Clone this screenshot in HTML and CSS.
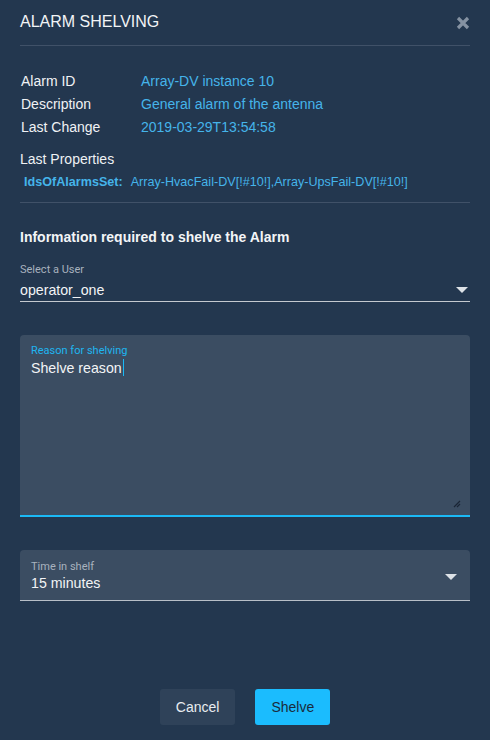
FILE: index.html
```html
<!DOCTYPE html>
<html>
<head>
<meta charset="utf-8">
<link rel="stylesheet" href="styles.css">
</head>
<body>
<div class="dialog">
  <div class="header">
    <h1 class="title">ALARM SHELVING</h1>
    <svg class="close" width="14" height="14" viewBox="0 0 14 14"><path d="M2 2 L12 12 M12 2 L2 12" stroke="#8592a2" stroke-width="3.2" stroke-linecap="butt"/></svg>
  </div>
  <div class="info">
    <div class="row"><span class="label">Alarm ID</span><span class="value">Array-DV instance 10</span></div>
    <div class="row"><span class="label">Description</span><span class="value">General alarm of the antenna</span></div>
    <div class="row"><span class="label">Last Change</span><span class="value">2019-03-29T13:54:58</span></div>
  </div>
  <div class="props-title">Last Properties</div>
  <div class="props"><span class="prop-key">IdsOfAlarmsSet:</span><span class="prop-val">Array-HvacFail-DV[!#10!],Array-UpsFail-DV[!#10!]</span></div>
  <div class="section-title">Information required to shelve the Alarm</div>
  <div class="select-user">
    <div class="small-label">Select a User</div>
    <div class="select-line"><span>operator_one</span><span class="arrow"></span></div>
  </div>
  <div class="textarea-box">
    <div class="small-label blue">Reason for shelving</div>
    <div class="text">Shelve reason<span class="caret"></span></div>
    <svg class="resize" width="8" height="8" viewBox="0 0 8 8"><path d="M1 7 L7 1 M4 7 L7 4" stroke="#1a2535" stroke-width="1.2"/></svg>
  </div>
  <div class="time-box">
    <div class="time-inner">
      <div class="small-label">Time in shelf</div>
      <div class="text">15 minutes</div>
    </div>
    <span class="arrow"></span>
  </div>
  <div class="buttons">
    <button class="btn cancel">Cancel</button>
    <button class="btn shelve">Shelve</button>
  </div>
</div>
</body>
</html>
```
FILE: styles.css
```css
* { box-sizing: border-box; }
html, body { margin: 0; padding: 0; }
body {
  background: #23374f;
  width: 490px;
  height: 740px;
  font-family: "Liberation Sans", Arial, sans-serif;
  color: #e8ecf0;
  overflow: hidden;
}
.dialog { padding: 0 20px; }
.header {
  display: flex;
  justify-content: space-between;
  align-items: center;
  height: 46px;
  border-bottom: 1px solid #405168;
  padding-bottom: 1px;
}
.title {
  margin: 0;
  font-size: 16px;
  font-weight: normal;
  color: #f2f4f6;
}
.close { margin-right: 0; margin-top: 1px; }
.info { padding-top: 23px; padding-left: 1px; }
.row { display: flex; height: 23px; align-items: center; font-size: 14px; }
.label { width: 120px; color: #f0f2f5; }
.value { color: #45b4ea; }
.props-title { margin-top: 12px; font-size: 14px; height: 18px; line-height: 18px; color: #eef1f4; }
.props {
  font-size: 12.6px;
  padding: 6px 0 12px 4px;
  border-bottom: 1px solid #405168;
  line-height: 16px;
}
.prop-key { font-weight: bold; color: #45b4ea; margin-right: 8px; }
.prop-val { color: #45b4ea; }
.section-title {
  font-weight: bold;
  font-size: 14px;
  margin-top: 26px;
  height: 17px;
  line-height: 17px;
  color: #f3f5f7;
}
.small-label {
  font-family: Roboto, "Liberation Sans", sans-serif;
  font-size: 11px;
  color: #a8b2be;
  line-height: 13px;
}
.small-label.blue { color: #1eb5f0; }
.select-user { margin-top: 17px; }
.select-line {
  display: flex;
  justify-content: space-between;
  align-items: center;
  font-size: 14.2px;
  height: 24px;
  margin-top: 2px;
  border-bottom: 1px solid #c4c9cf;
  color: #f2f4f6;
}
.arrow {
  width: 0; height: 0;
  border-left: 6px solid transparent;
  border-right: 6px solid transparent;
  border-top: 6px solid #dde2e7;
  margin-right: 2px;
}
.textarea-box {
  position: relative;
  margin-top: 33px;
  height: 182px;
  background: #3b4d62;
  border-radius: 4px 4px 0 0;
  border-bottom: 2px solid #1bb9f5;
  padding: 9px 11px;
}
.text { font-size: 14.2px; color: #f2f4f6; line-height: 18px; margin-top: 2px; }
.caret { display: inline-block; width: 1px; height: 17px; background: #1bb9f5; vertical-align: -3px; margin-left: 1px; }
.resize { position: absolute; right: 9px; bottom: 7px; }
.time-box {
  margin-top: 33px;
  height: 51px;
  background: #3b4d62;
  border-radius: 4px 4px 0 0;
  border-bottom: 1px solid #b8bfc8;
  padding: 10px 13px 0 11px;
  display: flex;
  justify-content: space-between;
  align-items: flex-start;
}
.time-box .arrow { margin-top: 14px; margin-right: 0; }
.time-inner .text { margin-top: 1px; }
.buttons {
  display: flex;
  justify-content: center;
  gap: 20px;
  margin-top: 88px;
}
.btn {
  border: none;
  border-radius: 3px;
  height: 36px;
  font-family: "Liberation Sans", Arial, sans-serif;
  font-size: 14px;
  padding: 0 16px;
}
.cancel { background: #2f4259; color: #e8ecf0; }
.shelve { background: #1bbcfe; color: #1a2b3c; }
```
